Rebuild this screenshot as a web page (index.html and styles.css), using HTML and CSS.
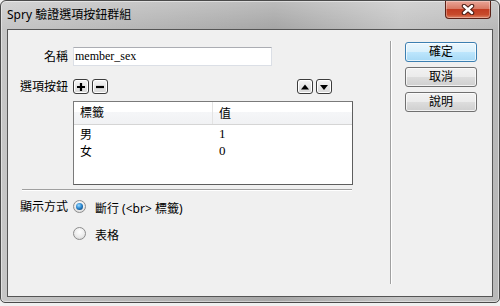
FILE: index.html
```html
<!DOCTYPE html>
<html lang="zh-Hant">

<head>
    <meta charset="UTF-8">
    <meta name="viewport" content="width=device-width, initial-scale=1.0">
    <title>Spry 驗證選項按鈕群組</title>
    <link rel="stylesheet" href="styles.css">
</head>

<body>
    <div class="window">
        <div class="titlebar">
            <span class="title">Spry 驗證選項按鈕群組</span>
            <button class="close-btn">
                <svg width="14" height="11" viewBox="0 0 14 11">
                    <path d="M3 2 L11 9 M11 2 L3 9" stroke="#4a1e16" stroke-width="4.5" stroke-linecap="round" />
                    <path d="M3 2 L11 9 M11 2 L3 9" stroke="#fff" stroke-width="2.4" stroke-linecap="round" />
                </svg>
            </button>
        </div>

        <div class="client">
            <div class="main">
                <div class="name-row">
                    <label class="field-label label-right" for="name">名稱</label>
                    <input type="text" id="name" class="text-input" value="member_sex" />
                </div>

                <div class="options-row">
                    <span class="field-label">選項按鈕</span>
                    <button class="tool-btn">
                        <svg width="10" height="10" viewBox="0 0 10 10"><path d="M5 1v8M1 5h8" stroke="#000" stroke-width="2.2" /></svg>
                    </button>
                    <button class="tool-btn">
                        <svg width="10" height="10" viewBox="0 0 10 10"><path d="M1 5h8" stroke="#000" stroke-width="2.2" /></svg>
                    </button>
                    <div class="move-group">
                        <button class="tool-btn">
                            <svg width="10" height="10" viewBox="0 0 10 10"><path d="M1 7.5h8L5 2.5z" fill="#000" /></svg>
                        </button>
                        <button class="tool-btn">
                            <svg width="10" height="10" viewBox="0 0 10 10"><path d="M1 3h8L5 8z" fill="#000" /></svg>
                        </button>
                    </div>
                </div>

                <div class="list">
                    <div class="list-head">
                        <span class="col-label">標籤</span>
                        <span class="col-value">值</span>
                    </div>
                    <div class="list-row">
                        <span class="col-label">男</span>
                        <span class="col-value num">1</span>
                    </div>
                    <div class="list-row">
                        <span class="col-label">女</span>
                        <span class="col-value num">0</span>
                    </div>
                </div>

                <div class="hsep"></div>

                <div class="display-row">
                    <span class="field-label">顯示方式</span>
                    <div class="radio-list">
                        <label class="radio-item"><span class="radio checked"></span><span class="radio-text">斷行 (&lt;br&gt; 標籤)</span></label>
                        <label class="radio-item"><span class="radio"></span><span class="radio-text">表格</span></label>
                    </div>
                </div>
            </div>

            <div class="vsep"></div>

            <div class="side">
                <button class="dlg-btn default">確定</button>
                <button class="dlg-btn">取消</button>
                <button class="dlg-btn">說明</button>
            </div>
        </div>
    </div>
</body>

</html>
```

FILE: styles.css
```css
body {
    margin: 0;
    background-color: #f0f0f0;
    font-family: "Noto Sans", "Noto Sans CJK TC", sans-serif;
    font-size: 12px;
    color: #000;
}

.window {
    width: 500px;
    height: 303px;
    box-sizing: border-box;
    display: flex;
    flex-direction: column;
    border: 1px solid #4a4a4a;
    border-radius: 6px 6px 5px 5px;
    background: linear-gradient(to right, #c6c6c6, #b2b2b2 35%, #a6a6a6 55%, #c4c4c4 80%, #b8b8b8);
    box-shadow: inset 0 0 0 1px rgba(255, 255, 255, 0.45);
}

.titlebar {
    height: 28px;
    display: flex;
    align-items: center;
    padding-left: 6px;
    background: linear-gradient(rgba(255, 255, 255, 0.25), rgba(255, 255, 255, 0));
    border-radius: 6px 6px 0 0;
}

.title {
    line-height: 14px;
}

.close-btn {
    margin-left: auto;
    margin-right: 8px;
    align-self: flex-start;
    width: 46px;
    height: 18px;
    padding: 0;
    display: flex;
    align-items: center;
    justify-content: center;
    border: 1px solid #5b2117;
    border-top: none;
    border-radius: 0 0 4px 4px;
    background: linear-gradient(#e9a597, #d87a65 45%, #c23c22 50%, #c84b2c 80%, #de8466);
    box-shadow: inset 0 0 0 1px rgba(255, 255, 255, 0.3);
}

.client {
    flex: 1;
    display: flex;
    margin: 0 6px 5px 6px;
    border: 1px solid #555;
    background: #f0f0f0;
}

.main {
    width: 382px;
    box-sizing: border-box;
    padding: 17px 0 0 12px;
}

.field-label {
    width: 53px;
    flex-shrink: 0;
    line-height: 13px;
}

.label-right {
    text-align: right;
    padding-right: 5px;
    box-sizing: border-box;
}

.name-row {
    display: flex;
    align-items: center;
}

.text-input {
    width: 199px;
    height: 19px;
    box-sizing: border-box;
    margin: 0;
    padding: 0 1px;
    border: 1px solid #dbdfe6;
    border-top-color: #abadb3;
    background: #fff;
    font-family: "Liberation Serif", serif;
    font-size: 12px;
}

.options-row {
    width: 312px;
    height: 15px;
    display: flex;
    align-items: center;
    margin-top: 13px;
}

.tool-btn {
    width: 16px;
    height: 15px;
    padding: 0;
    margin-right: 3px;
    display: flex;
    align-items: center;
    justify-content: center;
    border: 1px solid #3c3c3c;
    border-radius: 3px;
    background: linear-gradient(#f6f6f6, #e6e6e6 50%, #d8d8d8);
    box-shadow: inset 0 0 0 1px #fff;
}

.move-group {
    display: flex;
    margin-left: auto;
}

.move-group .tool-btn:last-child {
    margin-right: 0;
}

.list {
    width: 280px;
    height: 84px;
    box-sizing: border-box;
    margin: 7px 0 0 53px;
    border: 1px solid #7a7a7a;
    border-right-color: #5e5e5e;
    border-bottom-color: #5e5e5e;
    background: #fff;
}

.list-head {
    height: 22px;
    display: flex;
    align-items: center;
    border-bottom: 1px solid #d5d5d5;
    background: linear-gradient(#ffffff, #ffffff 45%, #f5f6f8 45%, #f1f2f4);
}

.list-head .col-label {
    height: 22px;
    line-height: 22px;
    border-right: 1px solid #e3e3e3;
}

.list-row {
    height: 17px;
    display: flex;
    align-items: center;
}

.col-label {
    width: 139px;
    box-sizing: border-box;
    padding-left: 6px;
}

.col-value {
    padding-left: 6px;
}

.num {
    font-family: "Liberation Serif", serif;
    font-size: 13px;
}

.hsep {
    width: 330px;
    height: 1px;
    margin: 4px 0 0 2px;
    background: #a0a0a0;
    border-bottom: 1px solid #fff;
}

.display-row {
    display: flex;
    align-items: flex-start;
    margin-top: 9px;
}

.radio-list {
    display: flex;
    flex-direction: column;
    gap: 12px;
}

.radio-item {
    display: flex;
    align-items: flex-start;
    gap: 9px;
}

.radio-text {
    line-height: 13px;
    margin-top: 2px;
}

.radio {
    position: relative;
    width: 13px;
    height: 13px;
    box-sizing: border-box;
    border: 1px solid #8c8c8c;
    border-radius: 50%;
    background: radial-gradient(circle at 50% 35%, #ffffff, #ececec 55%, #cfcfcf);
}

.radio.checked::after {
    content: "";
    position: absolute;
    left: 2px;
    top: 2px;
    width: 7px;
    height: 7px;
    border-radius: 50%;
    background: radial-gradient(circle at 40% 35%, #9fdcff, #2d8ad2 45%, #0f4d85 80%);
}

.vsep {
    width: 1px;
    margin: 11px 0 12px;
    background: #a0a0a0;
    border-right: 1px solid #fff;
}

.side {
    display: flex;
    flex-direction: column;
    gap: 5px;
    padding: 12px 0 0 13px;
}

.dlg-btn {
    width: 72px;
    height: 20px;
    padding: 0;
    font: inherit;
    line-height: 18px;
    color: #000;
    border: 1px solid #707070;
    border-radius: 3px;
    background: linear-gradient(#f2f2f2, #ebebeb 50%, #dddddd 50%, #cfcfcf);
    box-shadow: inset 0 0 0 1px rgba(255, 255, 255, 0.7);
}

.dlg-btn.default {
    border-color: #3c7fb1;
    background: linear-gradient(#eaf6fd, #d9f0fc 50%, #bee6fd 50%, #a7d9f5);
}
```
